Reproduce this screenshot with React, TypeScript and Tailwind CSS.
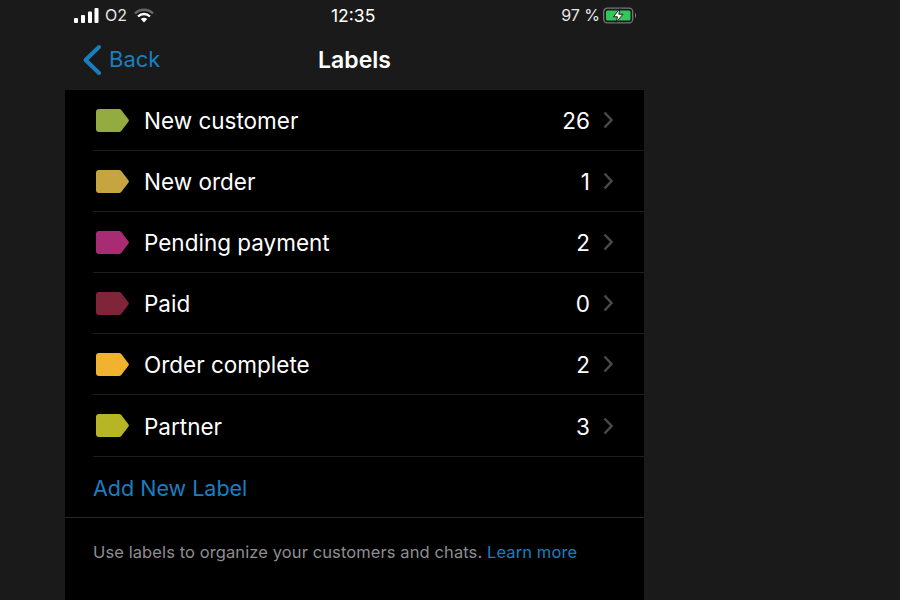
const rows = [
  { name: "New customer", n: "26", c: "#94ab41" },
  { name: "New order", n: "1", c: "#c6a541" },
  { name: "Pending payment", n: "2", c: "#a72c74" },
  { name: "Paid", n: "0", c: "#7f2439" },
  { name: "Order complete", n: "2", c: "#f0b22f" },
  { name: "Partner", n: "3", c: "#b6b526" },
];

function Tag({ color }: { color: string }) {
  return (
    <svg width="34" height="23" viewBox="0 0 34 23" className="shrink-0">
      <path d="M3 0H23Q24.500 0 25.500 1.200L32.500 10.500Q33.200 11.500 32.500 12.500L25.500 21.800Q24.500 23 23 23H3Q0 23 0 20V3Q0 0 3 0Z" fill={color} />
    </svg>
  );
}

function Signal() {
  return (
    <svg width="25" height="15" viewBox="0 0 25 15">
      <rect x="0" y="10" width="4" height="5" rx="1" fill="#fff" />
      <rect x="7" y="7" width="4" height="8" rx="1" fill="#fff" />
      <rect x="14" y="3.500" width="4" height="11.500" rx="1" fill="#fff" />
      <rect x="20.500" y="0" width="4" height="15" rx="1" fill="#fff" />
    </svg>
  );
}

function Wifi() {
  return (
    <svg width="20" height="15" viewBox="0 0 20 15" fill="none">
      <path d="M1 5.500C6 0.500 14 0.500 19 5.500" stroke="#666" strokeWidth="2.400" />
      <path d="M4 8.500C7.500 5.200 12.500 5.200 16 8.500" stroke="#fff" strokeWidth="2.400" />
      <path d="M6.800 11L10 14.500L13.200 11C11.200 9.400 8.800 9.400 6.800 11Z" fill="#fff" />
    </svg>
  );
}

function Battery() {
  return (
    <svg width="34" height="17" viewBox="0 0 34 17" fill="none">
      <rect x="0.700" y="1.200" width="29" height="14.600" rx="3.500" stroke="#777" strokeWidth="1.300" />
      <rect x="3" y="3.500" width="24.500" height="10" rx="1.500" fill="#30c85a" />
      <path d="M32 6V11C33.500 10.500 33.500 6.500 32 6Z" fill="#777" />
      <path d="M16.800 1.500L10.500 9.800H14.500L13 15.500L20 7.200H15.800L16.800 1.500Z" fill="#fff" stroke="#1a1a1a" strokeWidth="1" />
    </svg>
  );
}

export default function App() {
  return (
    <div className="w-[900px] h-[600px] overflow-hidden bg-[#1a1a1a] text-white font-['Inter',sans-serif]">
      <div className="w-[579px] ml-[65px]">
        <div className="h-[30px] flex items-center justify-between pl-[9px] pr-[7px] text-[16px] relative">
          <div className="flex items-center gap-[6px]">
            <Signal />
            <span className="text-[#e8e8e8]">O2</span>
            <span className="ml-[1px]"><Wifi /></span>
          </div>
          <span className="absolute left-[266px] top-[3px] text-[17.500px]">12:35</span>
          <div className="flex items-center gap-[3px]">
            <span className="text-[#e8e8e8]">97 %</span>
            <Battery />
          </div>
        </div>
        <div className="h-[60px] relative flex items-center justify-center">
          <div className="absolute left-[17px] top-[13px] flex items-center gap-[7px] text-[#1a7fc1]">
            <svg width="20" height="32" viewBox="0 0 20 32" fill="none">
              <path d="M17 3L3.500 16L17 29" stroke="#1a7fc1" strokeWidth="4" strokeLinecap="round" strokeLinejoin="round" />
            </svg>
            <span className="text-[22px]">Back</span>
          </div>
          <span className="text-[23px] font-semibold">Labels</span>
        </div>
        <div className="bg-black h-[510px]">
          {rows.map((r, i) => (
            <div key={r.name} className={`ml-[28px] flex items-center border-b border-[#1e1e1e] pr-[31px] ${i === 5 ? "h-[62px]" : "h-[61px]"}`}>
              <span className="ml-[3px]"><Tag color={r.c} /></span>
              <span className="ml-[14px] mt-[2px] text-[22.500px] flex-1">{r.name}</span>
              <span className="mt-[2px] text-[22.500px]">{r.n}</span>
              <svg width="10" height="18" viewBox="0 0 10 18" fill="none" className="ml-[13px]">
                <path d="M1.500 1.500L8.500 9L1.500 16.500" stroke="#4a4a4a" strokeWidth="2.400" />
              </svg>
            </div>
          ))}
          <div className="h-[61px] pl-[28px] pt-[2px] flex items-center border-b border-[#262626] text-[21.500px] text-[#1a7fc1]">
            Add New Label
          </div>
          <p className="pl-[28px] pt-[22px] text-[16.500px] tracking-[0.1px] text-[#8e8e93]">
            Use labels to organize your customers and chats. <span className="text-[#1a7fc1]">Learn more</span>
          </p>
        </div>
      </div>
    </div>
  );
}
